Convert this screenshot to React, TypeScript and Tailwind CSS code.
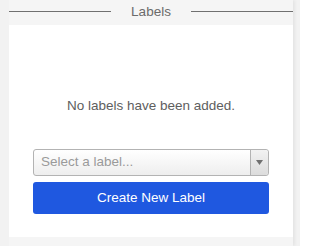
import React from "react";

export default function App() {
  return (
    <div className="w-[300px] h-[246px] bg-[#f2f2f2] overflow-hidden" style={{ fontFamily: '"Liberation Sans", Arial, sans-serif' }}>
      <div className="ml-[9px] w-[284px] h-full flex flex-col shadow-[2px_0_3px_rgba(0,0,0,0.06)]">
        <div className="h-[25px] bg-[#f5f5f5] flex items-center">
          <div className="flex-1 h-px bg-[#707070] mt-[-2px]" />
          <div className="px-5 text-[13.5px] text-[#6b6b6b] leading-none mt-[-2px]">Labels</div>
          <div className="flex-1 h-px bg-[#707070] mt-[-2px]" />
        </div>
        <div className="h-[212px] bg-white flex flex-col items-center">
          <div className="mt-[73px] text-[13.5px] text-[#5e5e5e] leading-[16px]">No labels have been added.</div>
          <div className="mt-[35px] w-[236px] h-[27px] rounded-[3px] border border-[#b3b3b3] bg-gradient-to-b from-white to-[#eeeeee] flex">
            <div className="flex-1 pl-[7px] flex items-center text-[13.5px] text-[#9a9a9a]">Select a label...</div>
            <div className="w-[18px] border-l border-[#b3b3b3] flex items-center justify-center bg-gradient-to-b from-[#f2f2f2] to-[#dcdcdc] rounded-r-[3px]">
              <svg width="7" height="5" viewBox="0 0 7 5"><path d="M0 0h7L3.5 5z" fill="#707070" /></svg>
            </div>
          </div>
          <button className="mt-[6px] w-[236px] h-[32px] rounded-[3px] bg-[#1f58e0] text-white text-[13.5px] flex items-center justify-center">
            Create New Label
          </button>
        </div>
        <div className="flex-1 bg-[#f5f5f5]" />
      </div>
    </div>
  );
}
